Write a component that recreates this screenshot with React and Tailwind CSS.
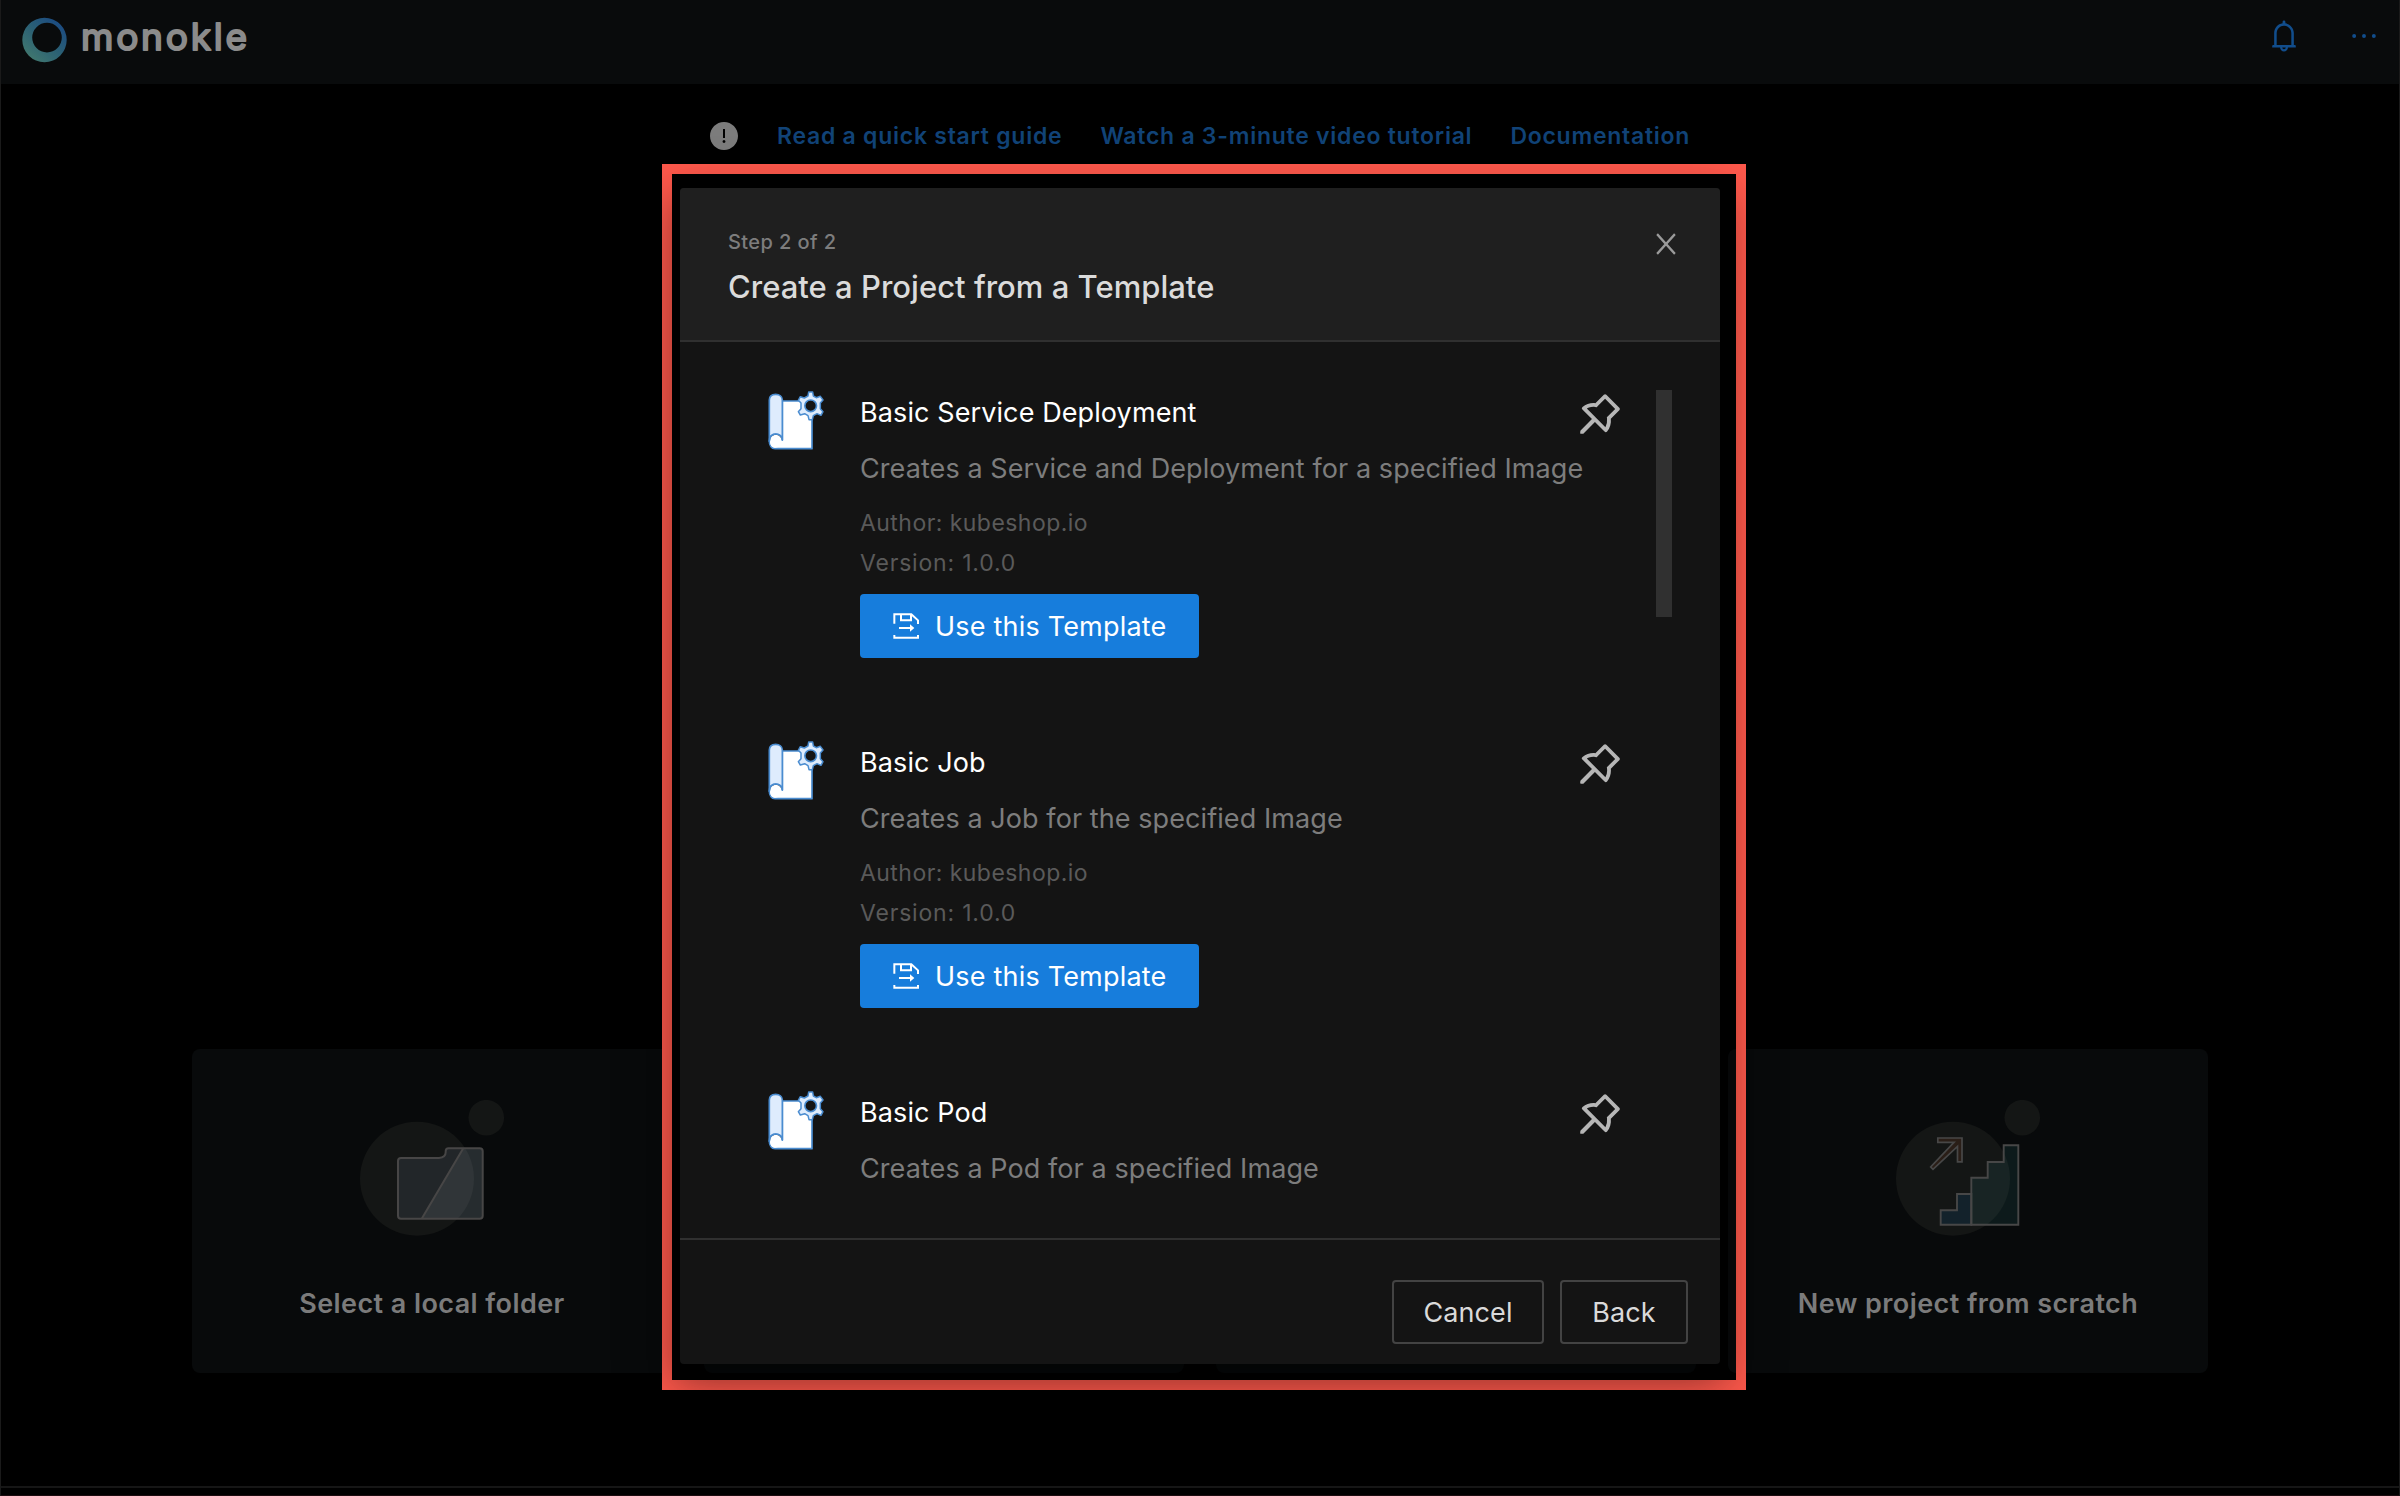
import React from 'react';
import {
  AiOutlineBell,
  AiOutlineEllipsis,
  AiOutlinePushpin,
  AiOutlineClose,
  AiFillExclamationCircle,
} from 'react-icons/ai';

const TEMPLATES = [
  {
    name: 'Basic Service Deployment',
    description: 'Creates a Service and Deployment for a specified Image',
    author: 'kubeshop.io',
    version: '1.0.0',
  },
  {
    name: 'Basic Job',
    description: 'Creates a Job for the specified Image',
    author: 'kubeshop.io',
    version: '1.0.0',
  },
  { name: 'Basic Pod', description: 'Creates a Pod for a specified Image' },
];

function Logo() {
  return (
    <svg width="240" height="84" viewBox="0 0 240 84" className="ml-[21px] block overflow-visible">
      <defs>
        <linearGradient id="ring" x1="0.15" y1="0.9" x2="0.85" y2="0.1">
          <stop offset="0" stopColor="#40776f" />
          <stop offset="0.5" stopColor="#2b6074" />
          <stop offset="1" stopColor="#1b4b82" />
        </linearGradient>
      </defs>
      <path
        fill="url(#ring)"
        fillRule="evenodd"
        d="M22.5 17.8a22.2 22.2 0 1 1 0 44.4a22.2 22.2 0 1 1 0-44.4zM25 22.8a14.8 14.8 0 1 0 0 29.6a14.8 14.8 0 1 0 0-29.6z"
      />
      <text
        x="59"
        y="50"
        fill="#8b8b8b"
        stroke="#8b8b8b"
        strokeWidth="2"
        strokeLinejoin="round"
        textLength="166"
        className="font-[Inter,sans-serif] text-[37px] font-normal"
      >
        monokle
      </text>
    </svg>
  );
}

function Circles() {
  return (
    <g fill="#141615">
      <circle cx="57" cy="78.7" r="57" />
      <circle cx="126.3" cy="17.7" r="17.8" />
    </g>
  );
}

function FolderArt() {
  return (
    <svg width="145" height="136" viewBox="0 0 145 136" className="block">
      <Circles />
      <path
        d="M41 58H79Q85.7 57.500 85.700 52V51Q85.700 48.200 88.500 48.200H103.300L61.700 118.800H41Q38 118.800 38 115.800V61Q38 58 41 58Z"
        fill="#222629"
      />
      <path
        d="M103.300 48.200H119.700Q122.700 48.200 122.700 51.200V115.800Q122.700 118.800 119.700 118.800H61.700Z"
        fill="#aabecd"
        fillOpacity="0.19"
      />
      <path
        d="M41 58H79Q85.700 57.500 85.700 52V51Q85.700 48.200 88.500 48.200H119.700Q122.700 48.200 122.700 51.200V115.800Q122.700 118.800 119.700 118.800H41Q38 118.800 38 115.800V61Q38 58 41 58ZM103.300 48.200L61.700 118.800"
        fill="none"
        stroke="#474646"
        strokeWidth="2"
      />
    </svg>
  );
}

function StairsArt() {
  return (
    <svg width="145" height="136" viewBox="0 0 145 136" className="block">
      <Circles />
      <g stroke="#474747" strokeWidth="1.9">
        <path d="M44.700 124.700V110.300H61V94H75.300V124.700Z" fill="#13222b" />
        <path
          d="M75.300 124.700V77.700H91.700V62H107.700V45.300H122.300V124.700Z"
          fill="#2f8080"
          fillOpacity="0.14"
        />
        <path
          d="M41.800 38H66V61.800H61.500V46.500L37 69.300L34.700 67L58 42.300H41.800Z"
          fill="#2a1e17"
          strokeWidth="1.700"
        />
      </g>
    </svg>
  );
}

function TemplateIcon() {
  return (
    <svg width="60" height="60" viewBox="80 60 180 180" className="block">
      <g stroke="#4a8cd0" strokeWidth="5" strokeLinejoin="round">
        <path d="M126 93H215V236H104C93 236 87 226 87 214L126 210Z" fill="#fff" />
        <path d="M87 214V90C87 79 95 73 106 73S126 79 126 90V210C124 198 116 192 106 192S87 200 87 214Z" fill="#deecfd" />
      </g>
      <path d="M89 214C89 202 96 195 106 195C116 195 123 201 124 212L140 225L104 233.500C95 233.500 89 225 89 214Z" fill="#fff" />
      <path d="M87 214C87 200 95 192 106 192S126 199 126 211" fill="none" stroke="#4a8cd0" strokeWidth="5" />
      <path
        d="M205 66H217L219 78L228 83L240 79L248 90L240 99V116L248 125L242 136L230 131L219 137L216 149H206L203 137L193 131L180 135L174 125L182 116V99L174 91L180 80L192 84L203 78Z"
        fill="#deecfd"
        stroke="#4a8cd0"
        strokeWidth="4.500"
        strokeLinejoin="round"
      />
      <circle cx="211" cy="107.500" r="17.500" fill="#141414" stroke="#4a8cd0" strokeWidth="5" />
    </svg>
  );
}

function SaveIcon() {
  return (
    <svg width="28" height="28" viewBox="126 81 84 84" className="block" fill="none" stroke="#fff" strokeWidth="6">
      <path d="M133 116V87.500H184L204 106V117" />
      <path d="M133 150V158.500H204V150" />
      <path d="M153 88V105.500H183V90" />
      <path d="M147 129H183" />
      <path d="M180 118L193 129L180 140Z" fill="#fff" stroke="none" />
    </svg>
  );
}

function TemplateRow({ name, description, author, version }) {
  return (
    <div className="flex h-[350px] shrink-0">
      <div className="ml-[39px] w-[93px]">
        <TemplateIcon />
      </div>
      <div className="flex w-[728px] flex-col items-start whitespace-nowrap pt-px">
        <div className="h-[44px] text-[27px] leading-[44px] tracking-[0.1px] text-white">{name}</div>
        <div className="mt-3 h-[44px] text-[27px] leading-[44px] tracking-[0.08px] text-[#7d7d7d]">{description}</div>
        {author && (
          <>
            <div className="mt-[12px] text-[23px] leading-[40px] tracking-[0.45px] text-[#5a5a5a]">Author: {author}</div>
            <div className="text-[23px] leading-[40px] tracking-[0.8px] text-[#5a5a5a]">Version: {version}</div>
            <button className="mt-[11px] flex h-16 w-[339px] items-center rounded-[4px] bg-[#177ddc] pl-8 text-[27px] tracking-[0.2px] text-white">
              <SaveIcon />
              <span className="ml-[15px] pt-0.5">Use this Template</span>
            </button>
          </>
        )}
      </div>
      <AiOutlinePushpin className="-ml-[15px] mt-[-3px] size-[54px] shrink-0 text-[#b6b6b6]" />
    </div>
  );
}

function ProjectCard({ label, children }) {
  return (
    <div className="flex h-[324px] w-[480px] flex-col items-center rounded-lg bg-[#080a0b] pt-[51px]">
      {children}
      {label && (
        <div className="mt-[48px] text-[27px] font-semibold leading-[40px] tracking-[0.42px] text-[#7b7b7b]">{label}</div>
      )}
    </div>
  );
}

function Modal() {
  return (
    <div className="absolute left-[661px] top-[164px] flex h-[1226px] w-[1084px] border-[10px] border-[#ff594c] pl-2 pt-[14px]">
      <div className="flex h-[1176px] w-[1040px] flex-col overflow-hidden rounded-[4px] bg-[#141414] shadow-[0_6px_12px_-8px_rgba(0,0,0,0.48),0_12px_32px_rgba(0,0,0,0.32),0_18px_56px_16px_rgba(0,0,0,0.2)]">
        <div className="flex h-[154px] justify-between border-b-2 border-[#303030] bg-[#1f1f1f] pl-12 pr-[38px]">
          <div>
            <div className="mt-[38px] text-[20px] font-medium leading-[32px] tracking-[0.4px] text-[#7d7d7d]">Step 2 of 2</div>
            <div className="mt-[7px] text-[31px] font-medium leading-[44px] tracking-[0.02px] text-[#dbdbdb]">
              Create a Project from a Template
            </div>
          </div>
          <AiOutlineClose className="mt-10 size-8 scale-x-90 text-[#9a9a9a]" />
        </div>
        <div className="flex h-[896px] pl-12 pt-12">
          <div className="flex h-[800px] w-[928px] flex-col overflow-hidden">
            {TEMPLATES.map((t) => (
              <TemplateRow key={t.name} {...t} />
            ))}
          </div>
          <div className="h-[227px] w-4 bg-[#303030]" />
        </div>
        <div className="flex h-[126px] justify-end gap-4 border-t-2 border-[#303030] pr-8 pt-10 text-[27px] tracking-[0.1px] text-[#dadada]">
          <button className="h-16 w-[152px] rounded-[4px] border-2 border-[#434343] pt-0.5">Cancel</button>
          <button className="h-16 w-[128px] rounded-[4px] border-2 border-[#434343] pt-0.5">Back</button>
        </div>
      </div>
    </div>
  );
}

export default function App() {
  return (
    <div className="relative flex h-[1496px] w-[2400px] flex-col overflow-hidden border-x border-[#1a1a1a] bg-black font-[Inter,sans-serif]">
      <header className="flex h-[84px] shrink-0 items-center justify-between bg-[#090b0c] text-[#114d8c]">
        <Logo />
        <div className="mb-3 mr-[17px] flex items-center gap-[44px]">
          <AiOutlineBell className="size-9" />
          <AiOutlineEllipsis className="size-9" />
        </div>
      </header>
      <nav className="ml-[707px] mt-[32px] flex h-10 items-center whitespace-nowrap text-[23px] font-semibold tracking-[0.74px] text-[#114377]">
        <AiFillExclamationCircle className="mr-[37px] size-8 text-[#7c7c7c]" />
        <span className="mr-[38px]">Read a quick start guide</span>
        <span className="mr-[38px]">Watch a 3-minute video tutorial</span>
        <span>Documentation</span>
      </nav>
      <main className="ml-[191px] mt-[893px] flex gap-8">
        <ProjectCard label="Select a local folder">
          <FolderArt />
        </ProjectCard>
        <ProjectCard />
        <ProjectCard />
        <ProjectCard label="New project from scratch">
          <StairsArt />
        </ProjectCard>
      </main>
      <footer className="mt-[113px] h-[10px] border-b border-t-2 border-b-[#1c0c10] border-t-[#161616]" />
      <Modal />
    </div>
  );
}
